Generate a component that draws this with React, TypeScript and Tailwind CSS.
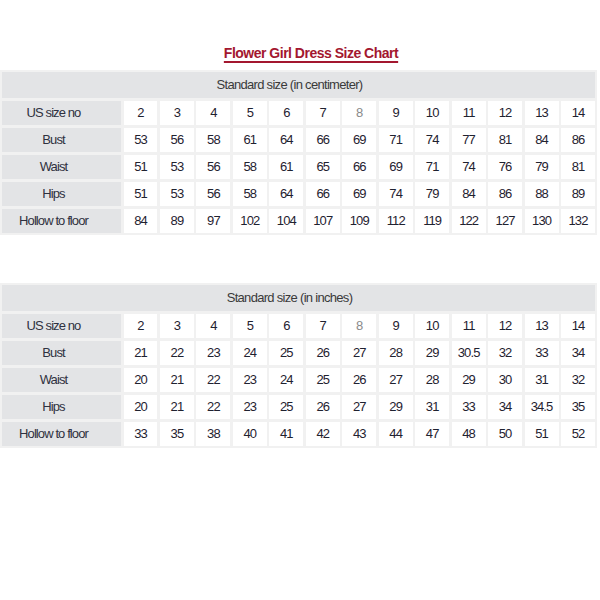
const sizes = ["2", "3", "4", "5", "6", "7", "8", "9", "10", "11", "12", "13", "14"];

const cmRows: [string, string[]][] = [
  ["Bust", ["53", "56", "58", "61", "64", "66", "69", "71", "74", "77", "81", "84", "86"]],
  ["Waist", ["51", "53", "56", "58", "61", "65", "66", "69", "71", "74", "76", "79", "81"]],
  ["Hips", ["51", "53", "56", "58", "64", "66", "69", "74", "79", "84", "86", "88", "89"]],
  ["Hollow to floor", ["84", "89", "97", "102", "104", "107", "109", "112", "119", "122", "127", "130", "132"]],
];

const inchRows: [string, string[]][] = [
  ["Bust", ["21", "22", "23", "24", "25", "26", "27", "28", "29", "30.5", "32", "33", "34"]],
  ["Waist", ["20", "21", "22", "23", "24", "25", "26", "27", "28", "29", "30", "31", "32"]],
  ["Hips", ["20", "21", "22", "23", "25", "26", "27", "29", "31", "33", "34", "34.5", "35"]],
  ["Hollow to floor", ["33", "35", "38", "40", "41", "42", "43", "44", "47", "48", "50", "51", "52"]],
];

function SizeTable({ title, rows }: { title: string; rows: [string, string[]][] }) {
  return (
    <div className="w-[597px] bg-[#f1f1f1] p-[2px] grid grid-cols-[119px_repeat(13,minmax(0,1fr))] gap-[2.5px] text-[13px] tracking-[-0.9px] text-[#1f2230]">
      <div className="col-span-14 h-[26px] bg-[#e3e4e6] flex items-center justify-center pr-[18px] text-[#3a3a3a] tracking-[-0.7px]">
        {title}
      </div>
      <div className="h-[24.5px] bg-[#e3e4e6] flex items-center justify-center pr-[16px] text-[#2f3140]">US size no</div>
      {sizes.map((s) => (
        <div
          key={s}
          className={`h-[24.5px] bg-white flex items-center justify-center ${s === "8" ? "text-[#8a8a8a]" : ""}`}
        >
          {s}
        </div>
      ))}
      {rows.map(([label, vals]) => (
        <>
          <div key={label} className="h-[24.5px] bg-[#e3e4e6] flex items-center justify-center pr-[16px] text-[#2f3140]">
            {label}
          </div>
          {vals.map((v, i) => (
            <div key={label + i} className="h-[24.5px] bg-white flex items-center justify-center">
              {v}
            </div>
          ))}
        </>
      ))}
    </div>
  );
}

export default function App() {
  return (
    <div className="w-[600px] h-[600px] bg-white font-['Liberation_Sans',Arial,sans-serif]">
      <div className="pt-[44px] h-[70px] flex justify-center pl-[22px]">
        <h1 className="text-[14px] font-bold tracking-[-0.5px] text-[#a3172f] underline decoration-[2px] underline-offset-[3px] leading-[18px]">
          Flower Girl Dress Size Chart
        </h1>
      </div>
      <SizeTable title="Standard size (in centimeter)" rows={cmRows} />
      <div className="h-[48px]" />
      <SizeTable title="Standard size (in inches)" rows={inchRows} />
    </div>
  );
}
